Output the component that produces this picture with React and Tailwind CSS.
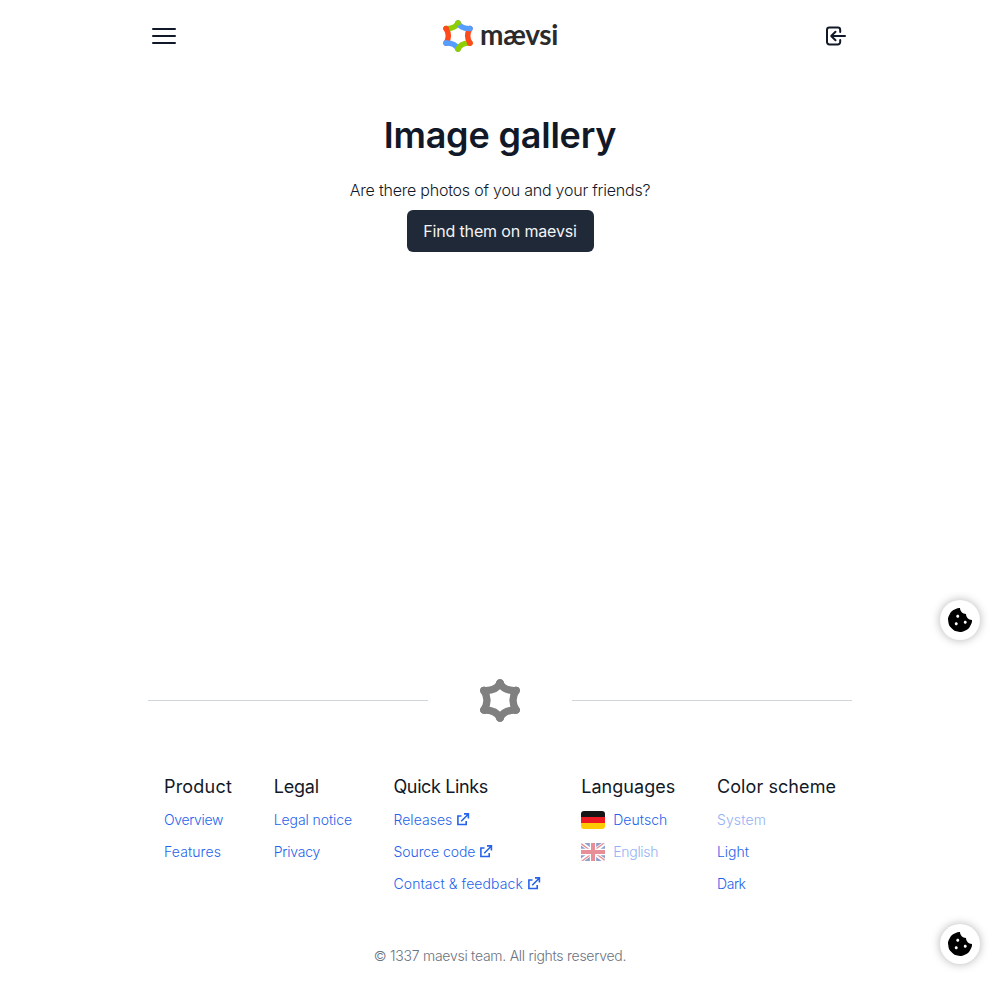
import React from 'react'
import { FaCookieBite } from 'react-icons/fa'

const EDGES = [
  ['M20 4Q16.2 12.2 4 11.5', '#8fce00'],
  ['M4 11.5Q10 21.3 4 31', '#ff4a1c'],
  ['M4 31Q16.2 30.8 20 39', '#559dff'],
  ['M20 39Q23.8 30.8 36 31', '#8fce00'],
  ['M36 31Q30 21.3 36 11.5', '#ff4a1c'],
  ['M36 11.5Q23.8 12.2 20 4', '#559dff'],
]
const CORNERS = [
  [20, 4],
  [4, 11.5],
  [4, 31],
  [20, 39],
  [36, 31],
  [36, 11.5],
]

function Star({ className, color }) {
  return (
    <svg viewBox="0 0 40 43" className={className} fill="none" strokeWidth="7.3" strokeLinecap="round">
      {EDGES.map(([d, c]) => (
        <path key={d} d={d} stroke={color || c} />
      ))}
      {CORNERS.map(([x, y], i) => (
        <circle key={i} cx={x} cy={y} r="3.75" fill={color || EDGES[i][1]} />
      ))}
    </svg>
  )
}

function ExternalIcon() {
  return (
    <svg viewBox="0 0 14 14" className="ml-1 size-3.5 shrink-0" fill="none" stroke="currentColor" strokeWidth="1.6">
      <path d="M5.5 3H1.9V11.5H10.2V7.9M5.2 8.3L12.2 1.3M8 .9H12.4V5.4" />
    </svg>
  )
}

function GermanFlag() {
  return (
    <svg viewBox="0 0 24 18" className="mr-2 h-[18px] w-6 rounded-[3px]">
      <path fill="#151515" d="M0 0h24v6H0z" />
      <path fill="#ed1c24" d="M0 6h24v6H0z" />
      <path fill="#ffcb00" d="M0 12h24v6H0z" />
    </svg>
  )
}

function BritishFlag() {
  return (
    <svg viewBox="0 0 24 18" className="mr-2 h-[18px] w-6 rounded-[2px]">
      <path fill="#1b3f94" d="M0 0h24v18H0z" />
      <path stroke="#fff" strokeWidth="4" d="M0 0l24 18M24 0L0 18" />
      <path stroke="#d0202f" strokeWidth="1.3" d="M0 .6l10 7.5M24 17.4l-10-7.5M23 0L13 7.5M1 18l10-7.5" />
      <path stroke="#fff" strokeWidth="6.4" d="M12 0v18M0 9h24" />
      <path stroke="#d0202f" strokeWidth="4" d="M12 0v18M0 9h24" />
    </svg>
  )
}

function Column({ title, tracking, width, children }) {
  return (
    <div className={`flex flex-col gap-3 whitespace-nowrap ${width}`}>
      <h2 className={`-mb-[3px] text-lg leading-7 font-normal ${tracking}`}>{title}</h2>
      {children}
    </div>
  )
}

function Item({ label, tracking, external, flag, disabled }) {
  return (
    <a className={`flex h-5 items-center text-sm font-light text-[#2563eb] ${disabled ? 'opacity-50' : ''}`}>
      {flag}
      <span className={tracking}>{label}</span>
      {external && <ExternalIcon />}
    </a>
  )
}

function CookieButton({ className }) {
  return (
    <button
      className={`absolute right-5 flex size-10 items-center justify-center rounded-full bg-white text-black shadow-[0_0_10px_rgba(0,0,0,0.3)] ${className}`}
    >
      <FaCookieBite className="size-6" />
    </button>
  )
}

export default function App() {
  return (
    <div className="relative h-[984px] overflow-hidden bg-white font-['Inter',sans-serif] text-[#111827]">
      <div className="mx-auto flex h-full w-[704px] flex-col">
        <header className="flex h-[72px] items-center justify-between px-1">
          <svg viewBox="0 0 24 24" className="size-6" stroke="currentColor" strokeWidth="2" strokeLinecap="round">
            <path d="M1 5h22M1 12h22M1 19h22" />
          </svg>
          <div className="flex items-center">
            <Star className="h-8 w-[30px]" />
            <span className="-mt-1 ml-[7px] w-[77px] font-['Lato',sans-serif] text-[28px] leading-8 font-bold tracking-[-0.3px] text-[#2b2b2b]">
              mævsi
            </span>
          </div>
          <svg
            viewBox="0 0 24 24"
            className="size-6"
            fill="none"
            stroke="currentColor"
            strokeWidth="2"
            strokeLinecap="round"
            strokeLinejoin="round"
          >
            <path d="M16.2 8V6a2.4 2.4 0 0 0-2.4-2.4H5.4A2.4 2.4 0 0 0 3 6v12a2.4 2.4 0 0 0 2.4 2.4h8.4a2.4 2.4 0 0 0 2.4-2.4v-2M11.5 7.7L7.2 12l4.3 4.3M7.2 12H21" />
          </svg>
        </header>

        <main className="flex h-[580px] flex-col items-center pt-[41px]">
          <h1 className="text-4xl leading-[45px] font-semibold tracking-[-0.2px]">Image gallery</h1>
          <p className="mt-5 leading-6 font-light tracking-[-0.22px]">Are there photos of you and your friends?</p>
          <button className="mt-2 flex h-[42px] w-[187px] items-center justify-center rounded-md bg-[#1f2937] tracking-[-0.15px] text-gray-100">
            Find them on maevsi
          </button>
        </main>

        <footer className="flex flex-col">
          <div className="flex h-24 items-center">
            <div className="h-px flex-1 bg-gray-300" />
            <div className="flex w-36 justify-center">
              <Star className="h-[43px] w-10" color="#808080" />
            </div>
            <div className="h-px flex-1 bg-gray-300" />
          </div>
          <div className="mt-[25px] flex h-[173px] justify-between px-4">
            <Column title="Product" tracking="tracking-[0.2px]" width="w-[68px]">
              <Item label="Overview" tracking="tracking-[-0.35px]" />
              <Item label="Features" tracking="tracking-[0.1px]" />
            </Column>
            <Column title="Legal" tracking="tracking-[-0.2px]" width="w-[78px]">
              <Item label="Legal notice" tracking="tracking-[-0.08px]" />
              <Item label="Privacy" tracking="tracking-[-0.24px]" />
            </Column>
            <Column title="Quick Links" tracking="tracking-[-0.39px]" width="w-[146px]">
              <Item label="Releases" tracking="tracking-[0.03px]" external />
              <Item label="Source code" tracking="tracking-[-0.08px]" external />
              <Item label="Contact & feedback" tracking="tracking-[0.08px]" external />
            </Column>
            <Column title="Languages" tracking="tracking-[0.03px]" width="w-[94px]">
              <Item label="Deutsch" tracking="tracking-[0.04px]" flag={<GermanFlag />} />
              <Item label="English" tracking="tracking-[-0.29px]" flag={<BritishFlag />} disabled />
            </Column>
            <Column title="Color scheme" tracking="tracking-[0.08px]" width="w-[119px]">
              <Item label="System" tracking="tracking-[0.12px]" disabled />
              <Item label="Light" tracking="tracking-[-0.05px]" />
              <Item label="Dark" tracking="tracking-[-0.44px]" />
            </Column>
          </div>
          <p className="text-center text-sm font-light tracking-[-0.26px] text-[#6b7280]">
            © 1337 maevsi team. All rights reserved.
          </p>
        </footer>
      </div>
      <CookieButton className="top-[600px]" />
      <CookieButton className="bottom-5" />
    </div>
  )
}
